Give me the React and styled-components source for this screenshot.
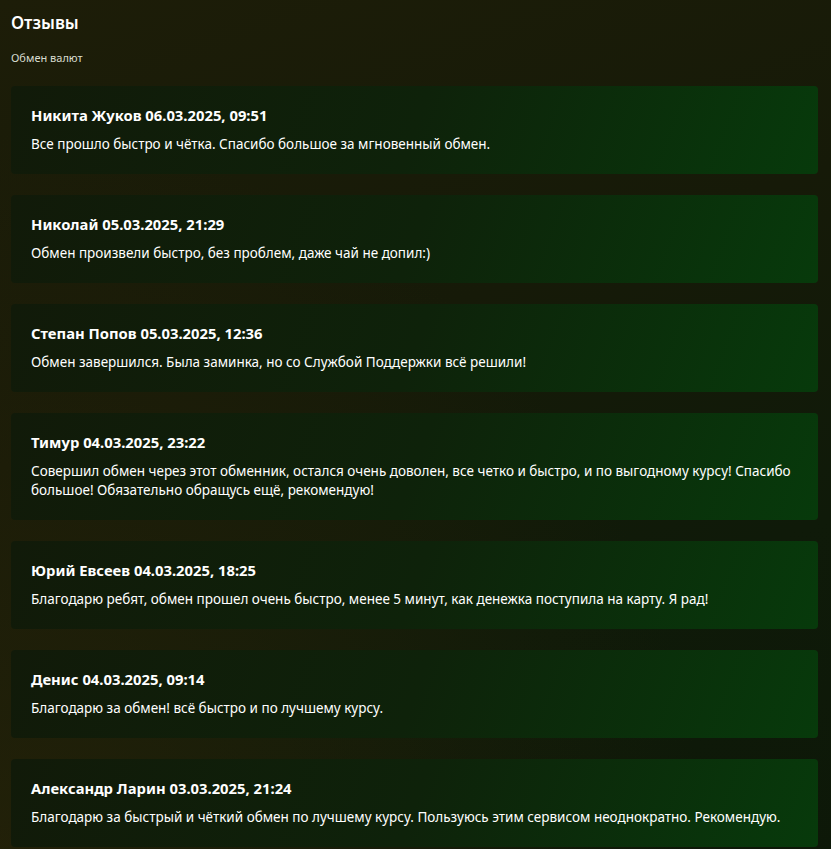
import React from "react";
import styled, { createGlobalStyle } from "styled-components";

const Global = createGlobalStyle`
  html, body { margin: 0; padding: 0; }
  body {
    min-height: 849px;
    background: linear-gradient(160deg, #1d1d08 0%, #161a08 40%, #0f1a09 70%, #0d1808 100%);
    font-family: "Noto Sans", "Open Sans", sans-serif;
    color: #ffffff;
  }
`;

const Page = styled.div`
  padding: 10px 13px 20px 11px;
  min-height: 849px;
  box-sizing: border-box;
  background: radial-gradient(ellipse at 0% 100%, rgba(50, 38, 8, 0.55) 0%, rgba(50, 38, 8, 0) 60%);
`;

const Title = styled.h1`
  margin: 0;
  font-size: 17px;
  font-weight: 600;
  line-height: 26px;
`;

const Subtitle = styled.div`
  margin-top: 15px;
  font-size: 11px;
  line-height: 14px;
  color: #d8dcd0;
`;

const List = styled.div`
  margin-top: 21px;
  display: flex;
  flex-direction: column;
  gap: 21px;
`;

const Card = styled.div`
  border-radius: 4px;
  padding: 18px 20px 20px 20px;
  background: linear-gradient(110deg, #111a09 0%, #0e220a 50%, #073a0b 100%);
`;

const Name = styled.div`
  font-size: 14.8px;
  font-weight: 700;
  line-height: 22px;
  margin-bottom: 9px;
`;

const Text = styled.div`
  font-size: 13.5px;
  line-height: 19px;
`;

const reviews = [
  ["Никита Жуков 06.03.2025, 09:51", "Все прошло быстро и чётка. Спасибо большое за мгновенный обмен."],
  ["Николай 05.03.2025, 21:29", "Обмен произвели быстро, без проблем, даже чай не допил:)"],
  ["Степан Попов 05.03.2025, 12:36", "Обмен завершился. Была заминка, но со Службой Поддержки всё решили!"],
  ["Тимур 04.03.2025, 23:22", "Совершил обмен через этот обменник, остался очень доволен, все четко и быстро, и по выгодному курсу! Спасибо большое! Обязательно обращусь ещё, рекомендую!"],
  ["Юрий Евсеев 04.03.2025, 18:25", "Благодарю ребят, обмен прошел очень быстро, менее 5 минут, как денежка поступила на карту. Я рад!"],
  ["Денис 04.03.2025, 09:14", "Благодарю за обмен! всё быстро и по лучшему курсу."],
  ["Александр Ларин 03.03.2025, 21:24", "Благодарю за быстрый и чёткий обмен по лучшему курсу. Пользуюсь этим сервисом неоднократно. Рекомендую."],
];

export default function App() {
  return (
    <>
      <Global />
      <Page>
        <Title>Отзывы</Title>
        <Subtitle>Обмен валют</Subtitle>
        <List>
          {reviews.map(([n, t]) => (
            <Card key={n}>
              <Name>{n}</Name>
              <Text>{t}</Text>
            </Card>
          ))}
        </List>
      </Page>
    </>
  );
}
